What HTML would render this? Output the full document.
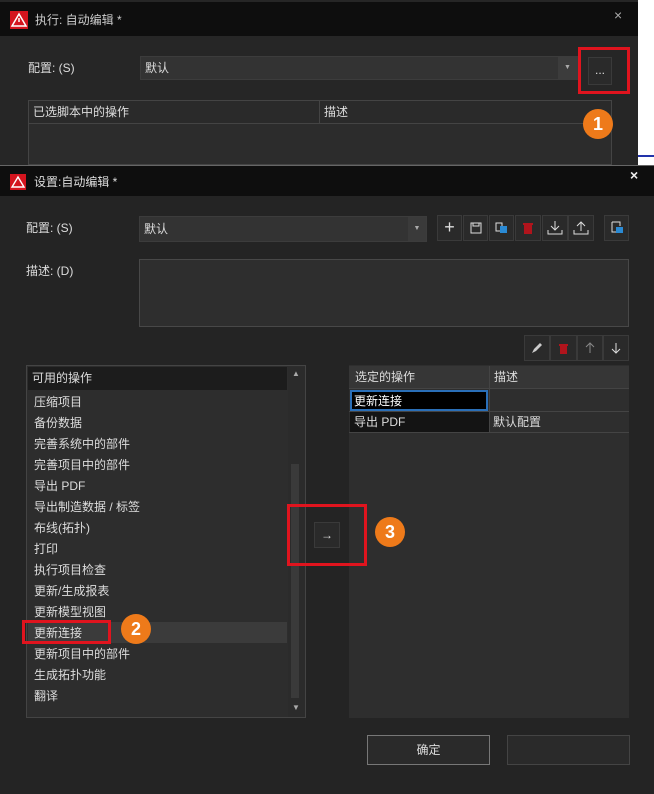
<!DOCTYPE html><html><head><meta charset="utf-8"><style>
*{box-sizing:border-box;margin:0;padding:0}
body{width:654px;height:794px;background:#fff;position:relative;overflow:hidden;font-family:"Liberation Sans","Noto Sans CJK SC",sans-serif;font-size:12px;color:#ddd}
.a{position:absolute}
.tb{background:#0e0e0e}
.btn{position:absolute;background:#2a2a2a;border:1px solid #3a3a3a}
.red{position:absolute;border:3px solid #e0141e}
.circ{position:absolute;width:30px;height:30px;border-radius:50%;background:#ee7a1a;color:#fff;font-weight:bold;font-size:18px;text-align:center;line-height:30px}
.it{position:absolute;left:34px;font-size:12px;color:#ddd}
</style></head><body>
<div class="a" style="left:0;top:0;width:654px;height:165px;background:#fff"></div>
<div class="a" style="left:638px;top:155px;width:16px;height:2px;background:#2233aa"></div>
<div class="a" style="left:0;top:0;width:638px;height:165px;background:#262626"></div>
<div class="a tb" style="left:0;top:2px;width:638px;height:34px"></div>
<svg class="a" style="left:10px;top:11px" width="18" height="18"><rect width="18" height="18" fill="#d4141e"/><path d="M9 3L16 15H2Z" fill="none" stroke="#fff" stroke-width="1.5"/><path d="M9 7v4" stroke="#fff" stroke-width="1.5"/></svg>
<div class="a" style="left:35px;top:11px;color:#ccc">执行: 自动编辑 *</div>
<div class="a" style="left:614px;top:7px;color:#aaa;font-size:14px">×</div>
<div class="a" style="left:28px;top:59px">配置: (S)</div>
<div class="a" style="left:140px;top:56px;width:438px;height:24px;background:#333;border:1px solid #3c3c3c"></div>
<div class="a" style="left:558px;top:57px;width:19px;height:22px;background:#3c3c3c;color:#aaa;font-size:7px;text-align:center;line-height:22px">▼</div>
<div class="a" style="left:145px;top:59px">默认</div>
<div class="btn" style="left:588px;top:57px;width:24px;height:28px;text-align:center;line-height:24px;color:#ddd">...</div>
<div class="red" style="left:578px;top:47px;width:52px;height:47px"></div>
<div class="a" style="left:28px;top:100px;width:584px;height:65px;background:#2c2c2c;border:1px solid #444"></div>
<div class="a" style="left:29px;top:101px;width:582px;height:23px;background:#2a2a2a;border-bottom:1px solid #444"></div>
<div class="a" style="left:319px;top:101px;width:1px;height:23px;background:#444"></div>
<div class="a" style="left:33px;top:103px">已选脚本中的操作</div>
<div class="a" style="left:324px;top:103px">描述</div>
<div class="circ" style="left:583px;top:109px">1</div>

<div class="a" style="left:0;top:165px;width:654px;height:629px;background:#242424;border-top:1px solid #666"></div>
<div class="a tb" style="left:0;top:166px;width:654px;height:30px"></div>
<svg class="a" style="left:10px;top:174px" width="16" height="16"><rect width="16" height="16" fill="#d4141e"/><path d="M8 3L14 13H2Z" fill="none" stroke="#fff" stroke-width="1.4"/></svg>
<div class="a" style="left:34px;top:173px;color:#ddd">设置:自动编辑 *</div>
<div class="a" style="left:630px;top:167px;color:#eee;font-size:14px;font-weight:bold">×</div>
<div class="a" style="left:26px;top:219px">配置: (S)</div>
<div class="a" style="left:139px;top:216px;width:288px;height:26px;background:#333;border:1px solid #3c3c3c"></div>
<div class="a" style="left:408px;top:217px;width:18px;height:24px;background:#3a3a3a;color:#aaa;font-size:7px;text-align:center;line-height:24px">▼</div>
<div class="a" style="left:144px;top:220px">默认</div>
<div class="btn" style="left:437px;top:215px;width:25px;height:26px;text-align:center;line-height:22px;font-size:18px;color:#ddd">+</div>
<div class="btn" style="left:463px;top:215px;width:25px;height:26px"><svg width="23" height="24"><rect x="7" y="7" width="10" height="10" fill="none" stroke="#ddd"/><rect x="9" y="7" width="6" height="3" fill="none" stroke="#ddd"/></svg></div>
<div class="btn" style="left:489px;top:215px;width:25px;height:26px"><svg width="23" height="24"><rect x="6" y="7" width="6" height="8" fill="none" stroke="#ddd"/><rect x="10" y="10" width="7" height="7" fill="#2a8ad4"/></svg></div>
<div class="btn" style="left:515px;top:215px;width:26px;height:26px"><svg width="24" height="24"><rect x="8" y="9" width="8" height="9" fill="#b0141c"/><rect x="7" y="7" width="10" height="2" fill="#b0141c"/></svg></div>
<div class="btn" style="left:542px;top:215px;width:26px;height:26px"><svg width="24" height="24"><path d="M12 5v9M8 10l4 4 4-4M5 14v4h14v-4" fill="none" stroke="#ddd"/></svg></div>
<div class="btn" style="left:568px;top:215px;width:26px;height:26px"><svg width="24" height="24"><path d="M12 15V6M8 10l4-4 4 4M5 14v4h14v-4" fill="none" stroke="#ddd"/></svg></div>
<div class="btn" style="left:604px;top:215px;width:25px;height:26px"><svg width="23" height="24"><path d="M7 6h8v4M7 6v10h5" fill="none" stroke="#ddd"/><rect x="11" y="11" width="7" height="6" fill="#2a8ad4"/></svg></div>
<div class="a" style="left:26px;top:262px">描述: (D)</div>
<div class="a" style="left:139px;top:259px;width:490px;height:68px;background:#2e2e2e;border:1px solid #484848"></div>
<div class="btn" style="left:524px;top:335px;width:26px;height:26px"><svg width="24" height="24"><path d="M7 17l2-4 6-6 2 2-6 6z" fill="#ccc"/></svg></div>
<div class="btn" style="left:550px;top:335px;width:27px;height:26px"><svg width="25" height="24"><rect x="9" y="10" width="7" height="8" fill="#b0141c"/><rect x="8" y="8" width="9" height="2" fill="#b0141c"/></svg></div>
<div class="btn" style="left:577px;top:335px;width:26px;height:26px"><svg width="24" height="24"><path d="M12 17V7M8 11l4-4 4 4" fill="none" stroke="#888"/></svg></div>
<div class="btn" style="left:603px;top:335px;width:26px;height:26px"><svg width="24" height="24"><path d="M12 7v10M8 13l4 4 4-4" fill="none" stroke="#ddd"/></svg></div>

<div class="a" style="left:26px;top:365px;width:280px;height:353px;background:#2d2d2d;border:1px solid #444"></div>
<div class="a" style="left:28px;top:367px;width:259px;height:23px;background:#1c1c1c"></div>
<div class="a" style="left:32px;top:369px">可用的操作</div>
<div class="a" style="left:288px;top:367px;width:17px;height:350px;background:#2b2b2b"></div>
<div class="a" style="left:292px;top:369px;color:#aaa;font-size:8px">▲</div>
<div class="a" style="left:292px;top:703px;color:#aaa;font-size:8px">▼</div>
<div class="a" style="left:291px;top:464px;width:8px;height:234px;background:#3a3a3a"></div>
<div class="a" style="left:28px;top:622px;width:259px;height:21px;background:#3b3b3b"></div>
<div class="it" style="top:393px">压缩项目</div>
<div class="it" style="top:414px">备份数据</div>
<div class="it" style="top:435px">完善系统中的部件</div>
<div class="it" style="top:456px">完善项目中的部件</div>
<div class="it" style="top:477px">导出 PDF</div>
<div class="it" style="top:498px">导出制造数据 / 标签</div>
<div class="it" style="top:519px">布线(拓扑)</div>
<div class="it" style="top:540px">打印</div>
<div class="it" style="top:561px">执行项目检查</div>
<div class="it" style="top:582px">更新/生成报表</div>
<div class="it" style="top:603px">更新模型视图</div>
<div class="it" style="top:624px">更新连接</div>
<div class="it" style="top:645px">更新项目中的部件</div>
<div class="it" style="top:666px">生成拓扑功能</div>
<div class="it" style="top:687px">翻译</div>
<div class="red" style="left:22px;top:620px;width:89px;height:24px"></div>
<div class="circ" style="left:121px;top:614px">2</div>

<div class="a" style="left:349px;top:365px;width:280px;height:353px;background:#2e2e2e"></div>
<div class="a" style="left:349px;top:366px;width:280px;height:23px;background:#363636;border-bottom:1px solid #444"></div>
<div class="a" style="left:489px;top:366px;width:1px;height:67px;background:#444"></div>
<div class="a" style="left:355px;top:368px">选定的操作</div>
<div class="a" style="left:494px;top:368px">描述</div>
<div class="a" style="left:350px;top:390px;width:138px;height:21px;background:#000;border:2px solid #2a6fb8"></div>
<div class="a" style="left:354px;top:392px;color:#fff">更新连接</div>
<div class="a" style="left:349px;top:411px;width:280px;height:22px;border-top:1px solid #444;border-bottom:1px solid #444"></div>
<div class="a" style="left:350px;top:412px;width:139px;height:20px;background:#141414"></div>
<div class="a" style="left:354px;top:413px">导出 PDF</div>
<div class="a" style="left:493px;top:413px">默认配置</div>

<div class="btn" style="left:314px;top:522px;width:26px;height:26px;text-align:center;line-height:24px;color:#ddd">→</div>
<div class="red" style="left:287px;top:504px;width:80px;height:62px"></div>
<div class="circ" style="left:375px;top:517px">3</div>

<div class="a" style="left:367px;top:735px;width:123px;height:30px;border:1px solid #777;background:#2a2a2a;text-align:center;line-height:28px">确定</div>
<div class="a" style="left:507px;top:735px;width:123px;height:30px;border:1px solid #444;background:#2a2a2a"></div>
</body></html>
